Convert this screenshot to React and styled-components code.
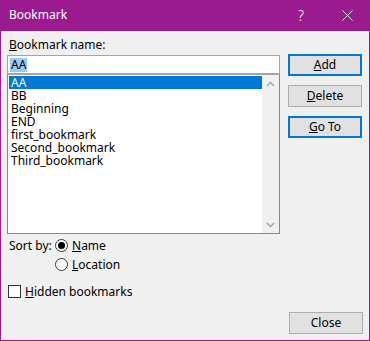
import styled, { createGlobalStyle } from 'styled-components';

const Global = createGlobalStyle`
  html, body { margin: 0; padding: 0; background: #f0f0f0; }
  body { font-family: "Noto Sans", "Open Sans", sans-serif; font-size: 12px; color: #000; }
  * { box-sizing: border-box; }
  u { text-underline-offset: 1px; text-decoration-thickness: 1px; }
`;

const Window = styled.div`
  width: 370px; height: 341px;
  display: flex; flex-direction: column;
  background: #f0f0f0;
  border: 1px solid #9b1b8f; border-top: 0;
`;

const TitleBar = styled.div`
  height: 31px; background: #9b1b8f; color: #fff;
  display: flex; align-items: center;
  margin: 0 -1px;
  padding-left: 9px;
`;

const Title = styled.div`
  flex: 1; font-size: 12px; line-height: 16px; padding-bottom: 1px;
`;

const CaptionButton = styled.div`
  width: 46px; height: 31px;
  display: flex; align-items: center; justify-content: center;
  font-size: 14px; font-weight: 300;
`;

const Body = styled.div`
  flex: 1; display: flex; flex-direction: column;
  padding: 6px 6px 6px 6px;
`;

const Main = styled.div`
  display: flex; gap: 8px;
`;

const LeftColumn = styled.div`
  width: 273px; display: flex; flex-direction: column;
`;

const RightColumn = styled.div`
  width: 74px; padding-top: 17px;
  display: flex; flex-direction: column; gap: 9px;
`;

const Label = styled.div`
  line-height: 16px; padding-left: 2px; margin-bottom: 2px;
`;

const TextBox = styled.div`
  height: 19px; border: 1px solid #a5a5a5; background: #fff;
  display: flex; align-items: center; padding-left: 2px;
`;

const Selection = styled.span`
  background: #99c9ef; line-height: 14px; padding: 0 1px;
`;

const ListBox = styled.div`
  height: 160px; border: 1px solid #888; border-top-color: #a5a5a5; background: #fff;
  display: flex;
`;

const Items = styled.div`
  flex: 1; padding: 1px 0 0 1px;
`;

const Item = styled.div`
  height: 13px; line-height: 13px; padding-left: 2px;
  background: ${p => (p.$selected ? '#0078d7' : 'transparent')};
  color: ${p => (p.$selected ? '#fff' : '#000')};
`;

const ScrollBar = styled.div`
  width: 17px; background: #f0f0f0;
  display: flex; flex-direction: column; justify-content: space-between;
`;

const Arrow = styled.div`
  height: 17px; display: flex; align-items: center; justify-content: center;
`;

const SortGroup = styled.div`
  margin-top: 2px;
  display: grid; grid-template-columns: 48px auto; grid-auto-rows: 19px;
  align-items: center;
`;

const SortLabel = styled.div`
  padding-left: 2px;
`;

const Option = styled.label`
  display: flex; align-items: center; gap: 4px;
  grid-column: 2;
`;

const Radio = styled.span`
  width: 13px; height: 13px; border-radius: 50%;
  border: 1px solid #333; background: #fff;
  display: flex; align-items: center; justify-content: center;
  &::after {
    content: ''; width: 7px; height: 7px; border-radius: 50%;
    background: ${p => (p.$checked ? '#000' : 'transparent')};
  }
`;

const CheckRow = styled.label`
  margin-top: 8px; height: 19px; padding-left: 1px;
  display: flex; align-items: center; gap: 4px;
`;

const CheckBox = styled.span`
  width: 13px; height: 13px; border: 1px solid #333; background: #fff;
`;

const Button = styled.div`
  height: 22px; width: 74px;
  display: flex; align-items: center; justify-content: center;
  background: #e1e1e1;
  border: ${p => (p.$default ? '2px solid #0078d7' : '1px solid #adadad')};
  padding-bottom: 1px;
`;

const Footer = styled.div`
  margin-top: auto; display: flex; justify-content: flex-end;
  padding-right: 0;
`;

const items = ['AA', 'BB', 'Beginning', 'END', 'first_bookmark', 'Second_bookmark', 'Third_bookmark'];

function Chevron({ up }) {
  return (
    <svg width="9" height="6" viewBox="0 0 9 6">
      <path d={up ? 'M1 5 L4.5 1.5 L8 5' : 'M1 1 L4.5 4.5 L8 1'} fill="none" stroke="#a3a3a3" strokeWidth="1.4" />
    </svg>
  );
}

export default function App() {
  return (
    <>
      <Global />
      <Window>
        <TitleBar>
          <Title>Bookmark</Title>
          <CaptionButton>?</CaptionButton>
          <CaptionButton>
            <svg width="11" height="11" viewBox="0 0 11 11">
              <path d="M0.5 0.5 L10.5 10.5 M10.5 0.5 L0.5 10.5" stroke="#fff" strokeWidth="1" />
            </svg>
          </CaptionButton>
        </TitleBar>
        <Body>
          <Main>
            <LeftColumn>
              <Label><u>B</u>ookmark name:</Label>
              <TextBox><Selection>AA</Selection></TextBox>
              <ListBox>
                <Items>
                  {items.map((t, i) => (
                    <Item key={t} $selected={i === 0}>{t}</Item>
                  ))}
                </Items>
                <ScrollBar>
                  <Arrow><Chevron up /></Arrow>
                  <Arrow><Chevron /></Arrow>
                </ScrollBar>
              </ListBox>
              <SortGroup>
                <SortLabel>Sort by:</SortLabel>
                <Option><Radio $checked /><span><u>N</u>ame</span></Option>
                <Option><Radio /><span><u>L</u>ocation</span></Option>
              </SortGroup>
              <CheckRow><CheckBox /><span><u>H</u>idden bookmarks</span></CheckRow>
            </LeftColumn>
            <RightColumn>
              <Button $default><span><u>A</u>dd</span></Button>
              <Button><span><u>D</u>elete</span></Button>
              <Button $default><span><u>G</u>o To</span></Button>
            </RightColumn>
          </Main>
          <Footer>
            <Button>Close</Button>
          </Footer>
        </Body>
      </Window>
    </>
  );
}
